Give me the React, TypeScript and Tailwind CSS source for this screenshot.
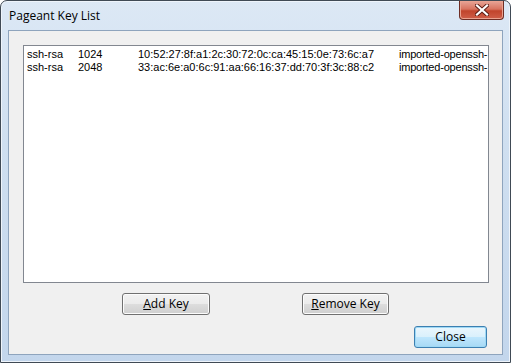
import React from 'react';

const keys = [
  { type: 'ssh-rsa', bits: '1024', fp: '10:52:27:8f:a1:2c:30:72:0c:ca:45:15:0e:73:6c:a7', comment: 'imported-openssh-' },
  { type: 'ssh-rsa', bits: '2048', fp: '33:ac:6e:a0:6c:91:aa:66:16:37:dd:70:3f:3c:88:c2', comment: 'imported-openssh-' },
];

function Button({ children, className = '', isDefault = false }: { children: React.ReactNode; className?: string; isDefault?: boolean }) {
  return (
    <div
      className={
        'h-[22px] flex items-center justify-center rounded-[3px] border text-[12px] text-black ' +
        (isDefault
          ? 'border-[#3c7fb1] shadow-[inset_0_0_0_1px_#9fd9f5] bg-[linear-gradient(#eaf6fd_0%,#d9f0fc_50%,#bee6fd_51%,#a7d9f5_100%)] '
          : 'border-[#707070] shadow-[inset_0_0_0_1px_#fcfcfc] bg-[linear-gradient(#f2f2f2_0%,#ebebeb_50%,#dddddd_51%,#cfcfcf_100%)] ') +
        className
      }
    >
      {children}
    </div>
  );
}

export default function App() {
  return (
    <div className="w-[511px] h-[363px] font-['Open_Sans','Liberation_Sans',sans-serif] bg-white">
      <div className="w-full h-full flex flex-col rounded-t-[7px] border border-[#404a55] bg-[linear-gradient(180deg,#dce8f5_0%,#cfdff0_40%,#c3d6ec_100%)] shadow-[inset_0_0_0_1px_#eef4fb]">
        {/* title bar */}
        <div className="h-[29px] flex items-start justify-between pl-[8px] pr-[6px]">
          <span className="mt-[6px] text-[12px] text-black">Pageant Key List</span>
          <div className="w-[45px] h-[19px] flex items-center justify-center rounded-b-[4px] border border-t-0 border-[#6e2d24] bg-[linear-gradient(#e8a597_0%,#d8735f_45%,#c1442c_55%,#cf5e48_100%)] shadow-[inset_0_0_0_1px_#eaa290]">
            <svg width="14" height="12" viewBox="0 0 14 12">
              <path d="M2 1.5 L12 10.5 M12 1.5 L2 10.5" stroke="#5a1a12" strokeWidth="4" strokeLinecap="square" />
              <path d="M2 1.5 L12 10.5 M12 1.5 L2 10.5" stroke="#ffffff" strokeWidth="2.2" strokeLinecap="square" />
            </svg>
          </div>
        </div>

        {/* client area */}
        <div className="mx-[7px] h-[325px] border border-[#8ea4bd] bg-[#f0f0f0] flex flex-col">
          <div className="mt-[14px] ml-[14px] w-[466px] h-[238px] border border-[#828790] bg-white pt-[2px] pl-[3px] font-['Liberation_Sans',Arial,sans-serif] text-[11px] leading-[13px] text-black">
            {keys.map((k) => (
              <div key={k.fp} className="flex whitespace-nowrap">
                <span className="w-[51px] shrink-0">{k.type}</span>
                <span className="w-[60px] shrink-0">{k.bits}</span>
                <span className="w-[261px] shrink-0">{k.fp}</span>
                <span className="tracking-[-0.2px]">{k.comment}</span>
              </div>
            ))}
          </div>

          <div className="mt-[10px] ml-[113px] flex gap-[92px]">
            <Button className="w-[88px]"><span><u>A</u>dd Key</span></Button>
            <Button className="w-[87px]"><span><u>R</u>emove Key</span></Button>
          </div>

          <div className="mt-[11px] flex justify-end pr-[15px]">
            <Button className="w-[73px]" isDefault>Close</Button>
          </div>
        </div>
      </div>
    </div>
  );
}
